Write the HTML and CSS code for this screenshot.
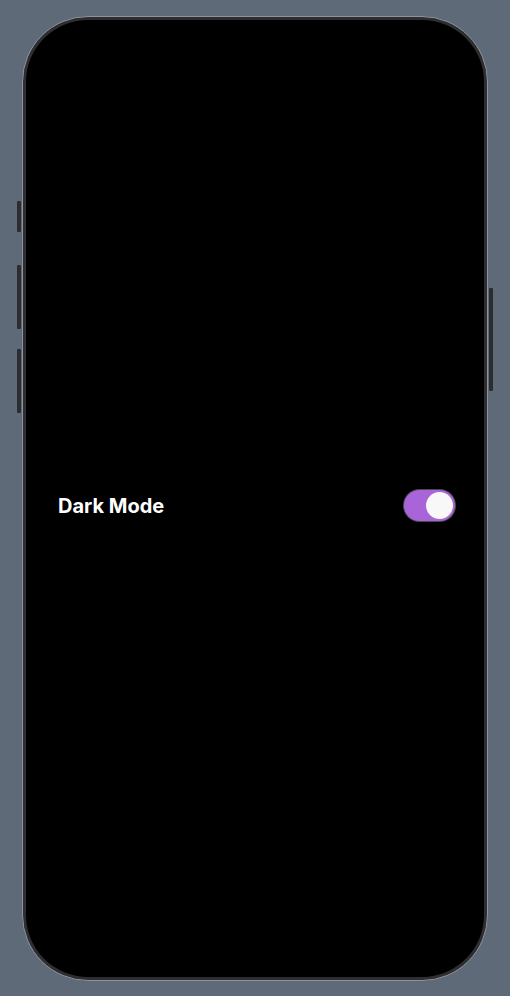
FILE: index.html
```html
<!DOCTYPE html>
<html>
<head>
<meta charset="utf-8">
<link rel="stylesheet" href="styles.css">
</head>
<body>
<div class="phone">
  <span class="btn btn-l1"></span>
  <span class="btn btn-l2"></span>
  <span class="btn btn-l3"></span>
  <span class="btn btn-r"></span>
  <div class="screen">
    <div class="row">
      <span class="label">Dark Mode</span>
      <span class="switch"><span class="knob"></span></span>
    </div>
  </div>
</div>
</body>
</html>
```
FILE: styles.css
```css
html, body {
  margin: 0;
  padding: 0;
}
body {
  width: 510px;
  height: 996px;
  background: #5f6a79;
  overflow: hidden;
}
.phone {
  position: relative;
  margin: 16px 0 0 22px;
  width: 466px;
  height: 965px;
  box-sizing: border-box;
  border-radius: 66px;
  border: 1px solid #8d949e;
  background: #2e2e31;
  padding: 3px;
}
.screen {
  width: 100%;
  height: 100%;
  background: #000;
  border-radius: 62px;
  display: flex;
  align-items: center;
}
.row {
  flex: 1;
  display: flex;
  align-items: center;
  justify-content: space-between;
  padding: 14px 29px 0 32px;
}
.label {
  font-family: Inter, "Noto Sans", sans-serif;
  font-weight: 700;
  font-size: 20px;
  color: #fff;
}
.switch {
  width: 51px;
  height: 31px;
  border-radius: 16px;
  background: #a964d9;
  display: flex;
  align-items: center;
  justify-content: flex-end;
  padding: 2px;
  box-sizing: border-box;
  box-shadow: 0 0 0 1px #4a4a4e;
}
.knob {
  width: 27px;
  height: 27px;
  border-radius: 50%;
  background: #f8f8f8;
}
.btn {
  position: absolute;
  width: 4px;
  background: #2c2d30;
  border-radius: 1px;
}
.btn-l1 { left: -6px; top: 184px; height: 31px; }
.btn-l2 { left: -6px; top: 248px; height: 64px; }
.btn-l3 { left: -6px; top: 332px; height: 64px; }
.btn-r { right: -6px; top: 271px; height: 103px; }
```
